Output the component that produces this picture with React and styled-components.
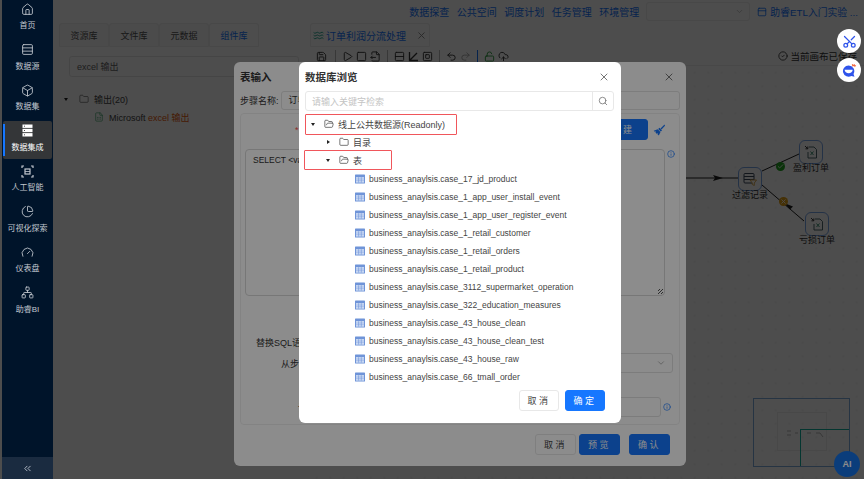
import React from "react";
import styled, { createGlobalStyle } from "styled-components";
import {
  House,
  Rows3,
  Rows2,
  Box,
  ChartPie,
  Gauge,
  Network,
  ChevronsLeft,
  ChevronDown,
  Folder,
  FolderOpen,
  Search,
  X,
  Info,
  Scissors,
  CircleCheck,
  Save,
  Play,
  Square,
  SquareSquare,
  FileOutput,
  Undo2,
  Redo2,
  LockOpen,
  CloudUpload,
  Waves,
  PanelTop,
  FileSpreadsheet,
  Check,
} from "lucide-react";

const font = `"Liberation Sans", "Noto Sans CJK SC", sans-serif`;

const GlobalStyle = createGlobalStyle`
  html, body { margin: 0; padding: 0; height: 100%; background: #fff; }
  body { font-family: ${font}; overflow: hidden; }
  * { box-sizing: border-box; }
`;

const Page = styled.div`
  position: relative;
  width: 864px;
  height: 479px;
  overflow: hidden;
  display: flex;
  background: #fff;
  padding-left: 2px;
`;

const Sidebar = styled.aside`
  position: relative;
  z-index: 30;
  width: 51px;
  flex: none;
  background: #00142a;
  display: flex;
  flex-direction: column;
`;

const NavList = styled.nav`
  flex: 1;
  display: flex;
  flex-direction: column;
  gap: 2.5px;
  margin-top: -1px;
  padding: 0 1px;
`;

const NavItem = styled.div`
  position: relative;
  height: 38px;
  display: flex;
  flex-direction: column;
  align-items: center;
  gap: 5.5px;
  padding-top: 3.5px;
  color: ${(p) => (p.$active ? "#fff" : "#c3c8d0")};
  font-size: 8px;
  line-height: 10px;
  white-space: nowrap;
  border-radius: 2px;
  background: ${(p) => (p.$active ? "#343638" : "transparent")};
  &::before {
    content: "";
    display: ${(p) => (p.$active ? "block" : "none")};
    position: absolute;
    left: 0;
    top: 3px;
    bottom: 3px;
    width: 2px;
    background: #1677ff;
  }
  svg {
    width: 13px;
    height: 13px;
    stroke-width: 1.6;
  }
`;

const Collapse = styled.div`
  height: 22px;
  background: #1a2b40;
  color: #b9c0ca;
  display: flex;
  align-items: center;
  justify-content: center;
  svg {
    width: 11px;
    height: 11px;
  }
`;

const Main = styled.main`
  flex: 1;
  min-width: 0;
  display: flex;
  flex-direction: column;
`;

const TopBar = styled.header`
  height: 23px;
  display: flex;
  align-items: center;
  justify-content: flex-end;
  gap: 7.5px;
  padding-right: 6px;
  color: #1677ff;
  font-size: 10px;
`;

const TopSelect = styled.div`
  width: 104px;
  height: 19px;
  margin-left: -1px;
  border: 1px solid #eee;
  border-radius: 3px;
  display: flex;
  align-items: center;
  justify-content: flex-end;
  padding-right: 5px;
  color: #bbb;
  svg {
    width: 9px;
    height: 9px;
  }
`;

const ProjectLink = styled.div`
  display: flex;
  align-items: center;
  gap: 3px;
  font-size: 9.8px;
  white-space: nowrap;
  svg {
    width: 10px;
    height: 10px;
  }
`;

const Content = styled.div`
  flex: 1;
  display: flex;
  min-height: 0;
`;

const LeftPanel = styled.section`
  width: 247px;
  flex: none;
  padding: 0 0 0 6px;
`;

const TabRow = styled.div`
  display: flex;
  height: 24px;
`;

const Tab = styled.div`
  width: 50px;
  display: flex;
  align-items: center;
  justify-content: center;
  font-size: 9px;
  color: ${(p) => (p.$active ? "#1677ff" : "#555")};
  background: ${(p) => (p.$active ? "#fff" : "#fafafa")};
  border: 1px solid #eee;
  border-radius: 3px 3px 0 0;
`;

const SearchField = styled.div`
  margin: 9px 0 0 10px;
  width: 230px;
  height: 21px;
  border: 1px solid #e8e8e8;
  border-radius: 3px;
  padding-left: 7px;
  display: flex;
  align-items: center;
  font-size: 9px;
  color: #666;
`;

const ComponentTree = styled.div`
  padding: 13px 0 0 5px;
  font-size: 9px;
  color: #444;
`;

const ComponentRow = styled.div`
  display: flex;
  align-items: center;
  height: 18px;
  gap: 5px;
  padding-left: ${(p) => p.$indent}px;
  svg {
    width: 10px;
    height: 10px;
    stroke-width: 1.4;
  }
`;

const Caret = styled.span`
  width: 0;
  height: 0;
  flex: none;
  ${(p) =>
    p.$open
      ? `border-left: 2.5px solid transparent; border-right: 2.5px solid transparent; border-top: 3px solid #222;`
      : `border-top: 2.5px solid transparent; border-bottom: 2.5px solid transparent; border-left: 3px solid #222;`}
`;

const Hit = styled.span`
  color: #e8590c;
`;

const RightPanel = styled.section`
  flex: 1;
  min-width: 0;
  display: flex;
  flex-direction: column;
  padding-left: 10px;
`;

const EditorTab = styled.div`
  width: 120px;
  height: 24px;
  border: 1px solid #eee;
  border-radius: 3px 3px 0 0;
  display: flex;
  align-items: center;
  justify-content: center;
  gap: 2px;
  color: #1677ff;
  font-size: 10px;
  svg {
    width: 11px;
    height: 11px;
    flex: none;
  }
`;

const TabClose = styled.span`
  display: flex;
  margin-left: 8px;
  color: #888;
`;

const Toolbar = styled.div`
  height: 19px;
  display: flex;
  align-items: center;
  justify-content: space-between;
  padding: 0 7px 0 5.5px;
  border-bottom: 1px solid #eee;
  color: #333;
  font-size: 10px;
`;

const ToolGroup = styled.div`
  display: flex;
  align-items: center;
  gap: 3px;
  svg {
    width: 11px;
    height: 11px;
  }
`;

const ToolDivider = styled.span`
  width: 1px;
  height: 12px;
  margin: 0 3px;
  background: ${(p) => p.$color || "#bbb"};
`;

const SavedNote = styled.div`
  display: flex;
  align-items: center;
  gap: 2px;
  font-size: 9.5px;
  white-space: nowrap;
  svg {
    width: 10px;
    height: 10px;
  }
`;

const Canvas = styled.div`
  position: relative;
  flex: 1;
  background-image: radial-gradient(#d6d6d6 0.6px, transparent 0.7px);
  background-size: 13.5px 13.5px;
`;

const Links = styled.svg`
  position: absolute;
  left: 0;
  top: 0;
  width: 100%;
  height: 100%;
`;

const FlowNode = styled.div`
  position: absolute;
  left: ${(p) => p.$x}px;
  top: ${(p) => p.$y}px;
  width: 24px;
  height: 24px;
  border: 1px solid #7ba7ea;
  border-radius: 6px;
  background: #fff;
  display: flex;
  align-items: center;
  justify-content: center;
  svg {
    width: 14px;
    height: 14px;
  }
`;

const NodeLabel = styled.span`
  position: absolute;
  top: 21px;
  left: 50%;
  transform: translateX(-50%);
  font-size: 9px;
  line-height: 12px;
  white-space: nowrap;
  color: #333;
`;

const LinkBadge = styled.span`
  position: absolute;
  left: ${(p) => p.$x}px;
  top: ${(p) => p.$y}px;
  width: 9px;
  height: 9px;
  border-radius: 50%;
  background: ${(p) => p.$color};
  color: #fff;
  display: flex;
  align-items: center;
  justify-content: center;
  svg {
    width: 7px;
    height: 7px;
    stroke-width: 3;
  }
`;

const MiniMap = styled.div`
  position: absolute;
  right: 14px;
  bottom: 12px;
  width: 97px;
  height: 69px;
  border: 1px solid #7fb0e0;
`;

const MiniInner = styled.div`
  position: absolute;
  left: 23px;
  top: 13px;
  width: 50px;
  height: 39px;
  border: 1px solid #eee;
`;

const MiniFlow = styled.svg`
  position: absolute;
  left: 33px;
  top: 29px;
  width: 40px;
  height: 14px;
`;

const MiniViewport = styled.div`
  position: absolute;
  right: 0;
  bottom: 0;
  width: 49px;
  height: 37px;
  border-style: solid;
  border-color: #12b5a0;
  border-width: 1.5px 0 0 1.5px;
`;

const AiButton = styled.div`
  position: absolute;
  z-index: 11;
  right: 4px;
  bottom: 2px;
  width: 26px;
  height: 26px;
  border-radius: 50%;
  background: #1470e0;
  color: #fff;
  font-size: 9px;
  font-weight: 700;
  display: flex;
  align-items: center;
  justify-content: center;
`;

const Mask = styled.div`
  position: absolute;
  inset: 0;
  z-index: ${(p) => p.$z};
  background: rgba(0, 0, 0, 0.45);
`;

const Dialog = styled.div`
  position: absolute;
  z-index: ${(p) => p.$z};
  left: ${(p) => p.$x}px;
  top: 62px;
  width: ${(p) => p.$w}px;
  height: ${(p) => p.$h}px;
  background: #fff;
  border-radius: 6px;
  overflow: hidden;
  display: flex;
  flex-direction: column;
  color: #333;
`;

const DialogHead = styled.div`
  height: 29px;
  flex: none;
  display: flex;
  align-items: center;
  justify-content: space-between;
  padding: 0 11px 0 6px;
  font-size: 10.5px;
  font-weight: 700;
  color: #333;
  svg {
    width: 12px;
    height: 12px;
    color: #777;
  }
`;

const StepRow = styled.div`
  display: flex;
  align-items: center;
  height: 19px;
  padding: 0 6px;
  font-size: 9px;
  gap: 2px;
`;

const StepInput = styled.div`
  flex: 1;
  height: 19px;
  border: 1px solid #e4e4e4;
  border-radius: 3px;
  padding-left: 7px;
  line-height: 17px;
`;

const FormCard = styled.div`
  margin: 3px 6px 0;
  height: 312px;
  border: 1px solid #efefef;
  border-radius: 4px;
  padding: 5px 4px 0;
  display: flex;
  flex-direction: column;
`;

const SqlHead = styled.div`
  height: 21px;
  display: flex;
  align-items: center;
  padding: 0 10px 0 50px;
  color: #ff4d4f;
  font-size: 9px;
  svg {
    width: 12px;
    height: 12px;
    margin-left: 5px;
  }
`;

const SqlRow = styled.div`
  display: flex;
  gap: 2px;
  margin-top: 9px;
  svg {
    width: 8px;
    height: 8px;
    margin-top: 1px;
    color: #1677ff;
  }
`;

const SqlArea = styled.div`
  position: relative;
  width: 420px;
  height: 147px;
  border: 1px solid #d9d9d9;
  border-radius: 4px;
  padding: 4px 7px;
  font-size: 8.5px;
  line-height: 12px;
  &::after {
    content: "";
    position: absolute;
    right: 1px;
    bottom: 1px;
    width: 5px;
    height: 5px;
    background: repeating-linear-gradient(135deg, transparent 0 1px, #555 1px 2px);
  }
`;

const FormRow = styled.div`
  display: flex;
  align-items: center;
  font-size: 9px;
  height: 20px;
  margin-top: ${(p) => p.$gap}px;
  padding-left: ${(p) => p.$pad}px;
  padding-right: ${(p) => p.$right || 0}px;
  gap: 2px;
  svg {
    width: 8px;
    height: 8px;
    color: #1677ff;
  }
`;

const FieldBox = styled.div`
  flex: 1;
  height: 20px;
  border: 1px solid #e2e2e2;
  border-radius: 3px;
  display: flex;
  align-items: center;
  justify-content: flex-end;
  padding-right: 6px;
  svg {
    width: 10px;
    height: 10px;
    color: #aaa;
  }
`;

const DialogFoot = styled.div`
  display: flex;
  justify-content: flex-end;
  gap: ${(p) => p.$gap}px;
  padding: ${(p) => p.$pad};
`;

const Button = styled.button`
  width: ${(p) => p.$w || 41}px;
  height: 21px;
  padding: 0;
  flex: none;
  border-radius: 3px;
  border: 1px solid ${(p) => (p.$primary ? "#1677ff" : "#e8e8e8")};
  background: ${(p) => (p.$primary ? "#1677ff" : "#fff")};
  color: ${(p) => (p.$primary ? "#fff" : "#444")};
  font-family: inherit;
  font-size: 9px;
  letter-spacing: 2.5px;
`;

const KeywordBar = styled.div`
  margin: 0 7px 0 6px;
  height: 20px;
  flex: none;
  border: 1px solid #e8e8e8;
  border-radius: 3px;
  display: flex;
  align-items: center;
  justify-content: space-between;
  padding-left: 6px;
  font-size: 9px;
  color: #c4c4c4;
`;

const KeywordButton = styled.span`
  width: 21px;
  height: 20px;
  border-left: 1px solid #e8e8e8;
  display: flex;
  align-items: center;
  justify-content: center;
  color: #777;
  svg {
    width: 10px;
    height: 10px;
  }
`;

const DbTree = styled.div`
  position: relative;
  height: 269px;
  flex: none;
  margin-top: 3px;
  padding-top: 1px;
  overflow: hidden;
  font-size: 9px;
  color: #444;
`;

const DbRow = styled.div`
  height: 18px;
  display: flex;
  align-items: center;
  white-space: nowrap;
  padding-left: ${(p) => p.$indent}px;
  gap: 4px;
  svg {
    width: 10px;
    height: 10px;
    flex: none;
    stroke-width: 1.6;
    color: #333;
  }
`;

const TableRows = styled.div`
  margin-top: 1px;
  font-size: 8.5px;
`;

const Highlight = styled.span`
  position: absolute;
  left: ${(p) => p.$x}px;
  top: ${(p) => p.$y}px;
  width: ${(p) => p.$w}px;
  height: ${(p) => p.$h}px;
  border: 1px solid #f0565b;
  border-radius: 1px;
`;

const CaretSlot = styled.span`
  width: 12px;
  margin-right: 1px;
  flex: none;
  display: flex;
  justify-content: center;
`;

const Floater = styled.div`
  position: absolute;
  z-index: 20;
  right: 3px;
  top: ${(p) => p.$y}px;
  width: 24px;
  height: 24px;
  border-radius: 50%;
  background: #fff;
  display: flex;
  align-items: center;
  justify-content: center;
  color: #2f54eb;
  svg {
    width: 15px;
    height: 15px;
  }
`;

const RaisedScissors = styled(Scissors)`
  transform: rotate(-90deg);
`;

function StackIcon() {
  return (
    <svg viewBox="0 0 13 13">
      <rect x="1.500" y="0.500" width="10" height="3.400" fill="#fff" />
      <rect x="1.500" y="4.800" width="10" height="3.400" fill="#fff" />
      <rect x="1.500" y="9.100" width="10" height="3.400" fill="#fff" />
      <path d="M3 2.200h1M3 6.500h1M3 10.800h1" stroke="#343638" strokeWidth="0.900" />
    </svg>
  );
}

function AiIcon() {
  return (
    <svg viewBox="0 0 13 13" fill="none" stroke="currentColor">
      <path d="M1 3V1h2M10 1h2v2M12 10v2h-2M3 12H1v-2" strokeWidth="1.200" />
      <rect x="4" y="4" width="5" height="5" strokeWidth="1.200" />
      <path d="M4 6.500h5" strokeWidth="0.800" />
    </svg>
  );
}

function AxisIcon() {
  return (
    <svg viewBox="0 0 11 11" fill="none" stroke="currentColor" strokeWidth="1.300">
      <path d="M1.500 1v8.500H10M1.500 9.500L9 2" />
    </svg>
  );
}

function BroomIcon() {
  return (
    <svg viewBox="0 0 12 12" fill="#1677ff">
      <path d="M11.500 0.500l-4 4 1 1 3.500-3.800z" />
      <path d="M6.500 3.800l2.500 2.700-1.200 1.100L5.200 5z" />
      <path d="M4.700 5.300l2.800 2.800-1.700 3.400-1.300-1.200.3-1.300-1.200.8L2.500 8.600l.7-1.300-1.400.5L.700 6.800z" />
    </svg>
  );
}

function FilterTableIcon() {
  return (
    <svg viewBox="0 0 14 14" fill="none">
      <rect x="1" y="1.500" width="10" height="9.500" rx="1" stroke="#3c4a5c" strokeWidth="1" />
      <path d="M1 4.500h10M1 7.500h10" stroke="#3c4a5c" strokeWidth="1" />
      <path d="M7 8h6.500L11.300 11v2.500L9.300 12.500V11z" fill="#fff" stroke="#d9a441" strokeWidth="0.900" />
    </svg>
  );
}

function ExcelFileIcon() {
  return (
    <svg viewBox="0 0 14 14" fill="none">
      <path d="M5 2h5l2.500 2.500V13H4V7" stroke="#3c5a5c" strokeWidth="0.900" />
      <path d="M6.500 6.500l3 3.500M9.500 6.500l-3 3.500" stroke="#2e8b6a" strokeWidth="0.900" />
      <path d="M1 1l2.500 2.500M3.800 1.500v2.300H1.500" stroke="#222" strokeWidth="0.900" />
    </svg>
  );
}

function ChatLogo() {
  return (
    <svg viewBox="0 0 16 16">
      <path d="M7 2.600a6 6 0 1 0 3 11.200l3.300.8-1-3A6 6 0 0 0 7 2.600z" fill="#2f54eb" />
      <path d="M2.800 7.200h8.600c-.2 2.300-2 3.700-4.300 3.700S3 9.500 2.800 7.200z" fill="#fff" />
      <path d="M11 1.200l.6 2.300L13 1.500l.5 2.200L15 2.500" stroke="#f0562b" strokeWidth="1" fill="none" />
    </svg>
  );
}

const navItems = [
  { label: "首页", icon: House },
  { label: "数据源", icon: Rows3 },
  { label: "数据集", icon: Box },
  { label: "数据集成", icon: StackIcon, active: true },
  { label: "人工智能", icon: AiIcon },
  { label: "可视化探索", icon: ChartPie },
  { label: "仪表盘", icon: Gauge },
  { label: "助睿BI", icon: Network },
];

const tables = [
  "business_anaylsis.case_17_jd_product",
  "business_anaylsis.case_1_app_user_install_event",
  "business_anaylsis.case_1_app_user_register_event",
  "business_anaylsis.case_1_retail_customer",
  "business_anaylsis.case_1_retail_orders",
  "business_anaylsis.case_1_retail_product",
  "business_anaylsis.case_3112_supermarket_operation",
  "business_anaylsis.case_322_education_measures",
  "business_anaylsis.case_43_house_clean",
  "business_anaylsis.case_43_house_clean_test",
  "business_anaylsis.case_43_house_raw",
  "business_anaylsis.case_66_tmall_order",
];

function TableIcon() {
  return (
    <svg viewBox="0 0 10 10">
      <rect x="0" y="0.500" width="10" height="9" rx="0.600" fill="#6f94d8" />
      <path d="M1 3.200h8v5.400H1z" fill="#dbe6f8" />
      <path d="M1 5h8M1 6.800h8M3.600 3.200v5.400M6.300 3.200v5.400" stroke="#6f94d8" strokeWidth="0.600" fill="none" />
    </svg>
  );
}

export default function App() {
  return (
    <Page>
      <GlobalStyle />
      <Sidebar>
        <NavList>
          {navItems.map((item) => (
            <NavItem key={item.label} $active={item.active}>
              <item.icon />
              {item.label}
            </NavItem>
          ))}
        </NavList>
        <Collapse>
          <ChevronsLeft />
        </Collapse>
      </Sidebar>

      <Main>
        <TopBar>
          <span>数据探查</span>
          <span>公共空间</span>
          <span>调度计划</span>
          <span>任务管理</span>
          <span>环境管理</span>
          <TopSelect>
            <ChevronDown />
          </TopSelect>
          <ProjectLink>
            <PanelTop />
            助睿ETL入门实验 ...
          </ProjectLink>
        </TopBar>
        <Content>
          <LeftPanel>
            <TabRow>
              <Tab>资源库</Tab>
              <Tab>文件库</Tab>
              <Tab>元数据</Tab>
              <Tab $active>组件库</Tab>
            </TabRow>
            <SearchField>excel 输出</SearchField>
            <ComponentTree>
              <ComponentRow $indent={0}>
                <Caret $open />
                <Folder style={{ marginLeft: 6 }} />
                输出(20)
              </ComponentRow>
              <ComponentRow $indent={30}>
                <FileSpreadsheet color="#2a9d5c" />
                <span>
                  Microsoft <Hit>excel 输出</Hit>
                </span>
              </ComponentRow>
            </ComponentTree>
          </LeftPanel>
          <RightPanel>
            <EditorTab>
              <Waves color="#17a38a" />
              订单利润分流处理
              <TabClose>
                <X />
              </TabClose>
            </EditorTab>
            <Toolbar>
              <ToolGroup>
                <Save style={{ marginRight: 2 }} />
                <ToolDivider />
                <Play />
                <Square />
                <FileOutput />
                <ToolDivider />
                <Rows2 />
                <AxisIcon />
                <SquareSquare />
                <ToolDivider />
                <Undo2 />
                <Redo2 color="#aaa" />
                <ToolDivider $color="#1677ff" />
                <LockOpen color="#2e9e3f" />
                <CloudUpload />
              </ToolGroup>
              <SavedNote>
                <CircleCheck />
                当前画布已保存
              </SavedNote>
            </Toolbar>
            <Canvas>
              <Links viewBox="0 0 554 413">
                <path d="M370 112H428" stroke="#222" strokeWidth="1" />
                <path d="M403 109l10 3-10 3 2-3z" fill="#222" />
                <path d="M452 105l37-17M452 119l42 36" stroke="#222" strokeWidth="1" />
                <path d="M474 137l9 3.500-3 3z" fill="#222" />
              </Links>
              <FlowNode $x={428} $y={101}>
                <FilterTableIcon />
                <NodeLabel>过滤记录</NodeLabel>
              </FlowNode>
              <FlowNode $x={489} $y={74}>
                <ExcelFileIcon />
                <NodeLabel>盈利订单</NodeLabel>
              </FlowNode>
              <FlowNode $x={495} $y={146}>
                <ExcelFileIcon />
                <NodeLabel>亏损订单</NodeLabel>
              </FlowNode>
              <LinkBadge $x={465.5} $y={95.5} $color="#1fa61f">
                <Check />
              </LinkBadge>
              <LinkBadge $x={468.5} $y={130.5} $color="#e8a317">
                <X />
              </LinkBadge>
              <MiniMap>
                <MiniInner />
                <MiniFlow viewBox="0 0 40 14">
                  <path d="M0 3h4M0 7h4M8 5h3M20 5h4M29 5h4l3 4" stroke="#bbb" strokeWidth="1" fill="none" />
                </MiniFlow>
                <MiniViewport />
              </MiniMap>
              <AiButton>AI</AiButton>
            </Canvas>
          </RightPanel>
        </Content>
      </Main>

      <Mask $z={10} />
      <Dialog $z={11} $x={234} $w={452} $h={404}>
        <DialogHead>
          表输入
          <X />
        </DialogHead>
        <StepRow>
          步骤名称:
          <StepInput>订单</StepInput>
        </StepRow>
        <FormCard>
          <SqlHead>
            *
            <Button $primary $w={50} style={{ marginLeft: "auto" }}>
              新建
            </Button>
            <BroomIcon />
          </SqlHead>
          <SqlRow>
            <SqlArea>SELECT &lt;values&gt; FROM &lt;table name&gt;</SqlArea>
            <Info />
          </SqlRow>
          <FormRow $gap={36} $pad={11}>
            替换SQL语句里的变量
          </FormRow>
          <FormRow $gap={1} $pad={36} $right={2}>
            从步骤插入数据
            <FieldBox>
              <ChevronDown />
            </FieldBox>
          </FormRow>
          <FormRow $gap={24} $pad={53} $right={4}>
            记录数量限制
            <FieldBox />
            <Info />
          </FormRow>
        </FormCard>
        <DialogFoot $gap={3} $pad="9px 16px 0 0">
          <Button>取消</Button>
          <Button $primary>预览</Button>
          <Button $primary style={{ marginLeft: 6 }}>
            确认
          </Button>
        </DialogFoot>
      </Dialog>

      <Mask $z={12} />
      <Dialog $z={13} $x={299} $w={322} $h={361}>
        <DialogHead>
          数据库浏览
          <X />
        </DialogHead>
        <KeywordBar>
          请输入关键字检索
          <KeywordButton>
            <Search />
          </KeywordButton>
        </KeywordBar>
        <DbTree>
          <DbRow $indent={8}>
            <CaretSlot>
              <Caret $open />
            </CaretSlot>
            <FolderOpen />
            线上公共数据源(Readonly)
          </DbRow>
          <DbRow $indent={23}>
            <CaretSlot>
              <Caret />
            </CaretSlot>
            <Folder />
            目录
          </DbRow>
          <DbRow $indent={23}>
            <CaretSlot>
              <Caret $open />
            </CaretSlot>
            <FolderOpen />
            表
          </DbRow>
          <TableRows>
            {tables.map((name) => (
              <DbRow key={name} $indent={56}>
                <TableIcon />
                {name}
              </DbRow>
            ))}
          </TableRows>
          <Highlight $x={6} $y={0} $w={152} $h={21} />
          <Highlight $x={5} $y={36} $w={88} $h={20} />
        </DbTree>
        <DialogFoot $gap={6} $pad="7px 16px 0 0">
          <Button $w={40}>取消</Button>
          <Button $primary $w={40}>
            确定
          </Button>
        </DialogFoot>
      </Dialog>

      <Floater $y={29}>
        <RaisedScissors />
      </Floater>
      <Floater $y={58}>
        <ChatLogo />
      </Floater>
    </Page>
  );
}
